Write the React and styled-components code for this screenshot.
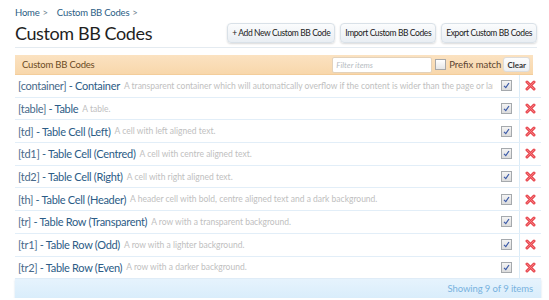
import styled, { createGlobalStyle } from "styled-components";

const GlobalStyle = createGlobalStyle`
  body {
    margin: 0;
    background: #fff;
    font-family: "Lato", "Open Sans", sans-serif;
  }
`;

const codes = [
  { tag: "container", name: "Container", desc: "A transparent container which will automatically overflow if the content is wider than the page or larger than the container." },
  { tag: "table", name: "Table", desc: "A table." },
  { tag: "td", name: "Table Cell (Left)", desc: "A cell with left aligned text." },
  { tag: "td1", name: "Table Cell (Centred)", desc: "A cell with centre aligned text." },
  { tag: "td2", name: "Table Cell (Right)", desc: "A cell with right aligned text." },
  { tag: "th", name: "Table Cell (Header)", desc: "A header cell with bold, centre aligned text and a dark background." },
  { tag: "tr", name: "Table Row (Transparent)", desc: "A row with a transparent background." },
  { tag: "tr1", name: "Table Row (Odd)", desc: "A row with a lighter background." },
  { tag: "tr2", name: "Table Row (Even)", desc: "A row with a darker background." },
];

const Page = styled.div`
  padding: 6px 8px 0 15px;
`;

const Breadcrumb = styled.div`
  font-size: 9.5px;
  letter-spacing: -0.2px;
  color: #2b5d85;
  height: 14px;
  line-height: 14px;
  white-space: nowrap;
  span {
    margin-right: 9px;
  }
  em {
    font-style: normal;
    color: #6d7f90;
    margin-left: 3px;
  }
`;

const TitleBar = styled.div`
  display: flex;
  align-items: center;
  justify-content: space-between;
  height: 26px;
  padding-bottom: 1px;
  border-bottom: 1px solid #e4ebf1;
  margin-right: 4px;
`;

const Title = styled.h1`
  margin: 0;
  font-size: 18px;
  font-weight: 400;
  letter-spacing: -0.4px;
  color: #1f1f1f;
  white-space: nowrap;
`;

const Buttons = styled.div`
  display: flex;
  gap: 5px;
`;

const Button = styled.button`
  height: 20px;
  padding: 0 4px;
  font-family: inherit;
  font-size: 8.5px;
  letter-spacing: -0.4px;
  white-space: nowrap;
  color: #222;
  background: linear-gradient(#fbfcfd, #e9eef3);
  border: 1px solid #d9e1e8;
  border-radius: 4px;
  box-shadow: 0 1px 2px rgba(0, 0, 0, 0.15);
`;

const List = styled.div`
  margin-top: 7px;
`;

const HeaderBar = styled.div`
  display: flex;
  align-items: center;
  height: 19px;
  margin-right: 8px;
  padding: 0 3px 0 7px;
  background: linear-gradient(#fbe2c1, #f8d7ab);
  border-bottom: 1px solid #f3cd9b;
  font-size: 9.5px;
  letter-spacing: -0.2px;
  color: #6b4a24;
`;

const HeaderTitle = styled.div`
  flex: 1;
`;

const FilterInput = styled.input`
  width: 92px;
  height: 12px;
  padding: 1px 3px;
  border: 1px solid #e3d2bb;
  border-radius: 2px;
  font-family: inherit;
  font-size: 8px;
  font-style: italic;
  &::placeholder {
    color: #b7bcc2;
  }
`;

const Prefix = styled.label`
  display: flex;
  align-items: center;
  margin-left: 3px;
  font-size: 9.5px;
  letter-spacing: 0;
  color: #5b4330;
  white-space: nowrap;
`;

const Box = styled.span`
  width: 9px;
  height: 9px;
  margin-right: 3px;
  border: 1px solid #a8a8a8;
  background: linear-gradient(#fff, #e6e6e6);
`;

const ClearButton = styled.button`
  margin-left: 2px;
  height: 15px;
  padding: 0 3px;
  font-family: inherit;
  font-size: 8px;
  font-weight: 700;
  color: #333;
  background: linear-gradient(#fdfdfd, #eceff2);
  border: 1px solid #dcdcdc;
  border-radius: 3px;
`;

const Row = styled.div`
  display: flex;
  align-items: stretch;
  height: 22.7px;
  box-sizing: border-box;
  border-bottom: 1px solid #e2eef8;
`;

const Main = styled.div`
  flex: 1;
  display: flex;
  align-items: center;
  padding-left: 3px;
  white-space: nowrap;
  overflow: hidden;
  min-width: 0;
`;

const Tag = styled.span`
  font-size: 11px;
  letter-spacing: -0.3px;
  color: #47698a;
`;

const Name = styled.span`
  font-size: 11px;
  letter-spacing: -0.3px;
  color: #2c5c86;
`;

const Desc = styled.span`
  margin-left: 4px;
  font-size: 8.5px;
  letter-spacing: 0;
  color: #c0c0c0;
`;

const CheckCell = styled.div`
  width: 26px;
  display: flex;
  align-items: center;
  justify-content: center;
`;

const Check = styled.span`
  display: flex;
  align-items: center;
  justify-content: center;
  width: 9px;
  height: 9px;
  border: 1px solid #a5a9ad;
  background: linear-gradient(#f4f4f4, #dcdcdc);
`;

const DeleteCell = styled.div`
  width: 21px;
  display: flex;
  align-items: center;
  justify-content: center;
  border-left: 1px solid #dbecf8;
`;

const Footer = styled.div`
  height: 19px;
  line-height: 19px;
  text-align: right;
  padding-right: 8px;
  font-size: 9.5px;
  letter-spacing: -0.1px;
  color: #78b2de;
  background: linear-gradient(#e6f3fd, #d9edfb);
  box-shadow: 0 1px 2px rgba(120, 160, 200, 0.35);
`;

const CheckMark = () => (
  <svg width="7" height="7" viewBox="0 0 7 7">
    <path d="M1 3.8 L2.8 5.6 L6 1" fill="none" stroke="#3b5aa8" strokeWidth="1.2" />
  </svg>
);

const DeleteIcon = () => (
  <svg width="11" height="11" viewBox="0 0 11 11">
    <path d="M2 2 L9 9 M9 2 L2 9" stroke="#e8484f" strokeWidth="3" strokeLinecap="round" />
    <path d="M2 2 L9 9 M9 2 L2 9" stroke="#f57a80" strokeWidth="1" strokeLinecap="round" />
  </svg>
);

export default function App() {
  return (
    <>
      <GlobalStyle />
      <Page>
        <Breadcrumb>
          <span>Home<em>&gt;</em></span>
          <span>Custom BB Codes<em>&gt;</em></span>
        </Breadcrumb>
        <TitleBar>
          <Title>Custom BB Codes</Title>
          <Buttons>
            <Button>+ Add New Custom BB Code</Button>
            <Button>Import Custom BB Codes</Button>
            <Button>Export Custom BB Codes</Button>
          </Buttons>
        </TitleBar>
        <List>
          <HeaderBar>
            <HeaderTitle>Custom BB Codes</HeaderTitle>
            <FilterInput placeholder="Filter items" />
            <Prefix>
              <Box />
              Prefix match
            </Prefix>
            <ClearButton>Clear</ClearButton>
          </HeaderBar>
          {codes.map((c) => (
            <Row key={c.tag}>
              <Main>
                <Tag>[{c.tag}]</Tag>
                <Name>&nbsp;- {c.name}</Name>
                <Desc>{c.desc}</Desc>
              </Main>
              <CheckCell>
                <Check>
                  <CheckMark />
                </Check>
              </CheckCell>
              <DeleteCell>
                <DeleteIcon />
              </DeleteCell>
            </Row>
          ))}
          <Footer>Showing 9 of 9 items</Footer>
        </List>
      </Page>
    </>
  );
}
